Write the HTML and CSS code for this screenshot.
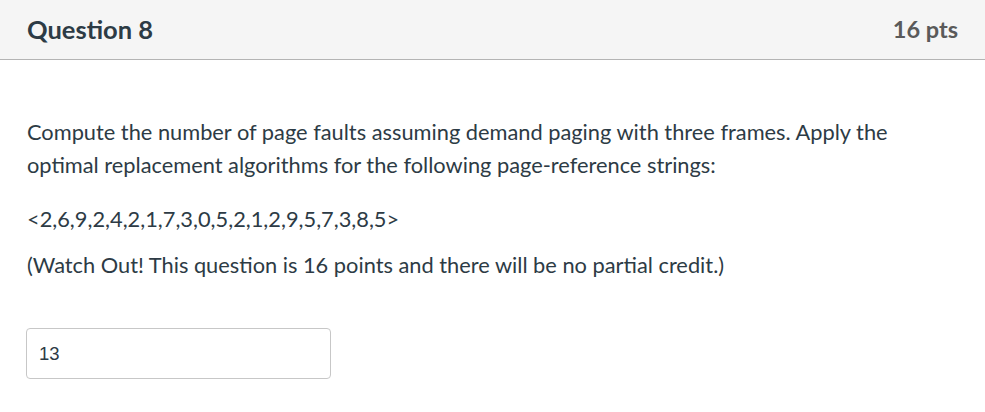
FILE: index.html
```html
<!DOCTYPE html>
<html>
<head>
<meta charset="utf-8">
<link rel="stylesheet" href="styles.css">
</head>
<body>
<div class="question">
  <div class="header">
    <h2 class="title">Question 8</h2>
    <div class="pts">16 pts</div>
  </div>
  <div class="content">
    <p class="p1">Compute the number of page faults assuming demand paging with three frames. Apply the optimal replacement algorithms for the following page-reference strings:</p>
    <p class="p2">&lt;2,6,9,2,4,2,1,7,3,0,5,2,1,2,9,5,7,3,8,5&gt;</p>
    <p class="p3">(Watch Out! This question is 16 points and there will be no partial credit.)</p>
    <div class="answer"><input class="input" type="text" value="13"></div>
  </div>
</div>
</body>
</html>
```
FILE: styles.css
```css
html, body { margin: 0; padding: 0; background: #fff; }
body { font-family: Lato, "Liberation Sans", sans-serif; color: #2d3b45; }
.question { width: 985px; }
.header {
  display: flex; justify-content: space-between; align-items: center;
  box-sizing: border-box; height: 60px;
  background: #f5f5f5; border-bottom: 1px solid #b4b4b4;
  padding: 0 27px 2px;
}
.title { margin: 0; font-size: 25.5px; font-weight: 700; color: #2d3b45; }
.pts { font-size: 23.5px; font-weight: 700; color: #5a5a5a; }
.content { padding: 55px 27px 0; }
.content p { margin: 0; font-size: 21.8px; line-height: 33px; color: #2d3b45; }
.p1 { width: 900px; }
.p2 { margin-top: 21px !important; }
.p3 { margin-top: 13px !important; }
.answer { margin-top: 47px; }
.input {
  box-sizing: border-box; width: 305px; height: 51px; margin-left: -1px;
  border: 1px solid #c7c7c7; border-radius: 4px; padding: 0 12px;
  font-family: "Liberation Sans", Arial, sans-serif; font-size: 18.5px; color: #2d3b45;
  outline: none;
}
```
